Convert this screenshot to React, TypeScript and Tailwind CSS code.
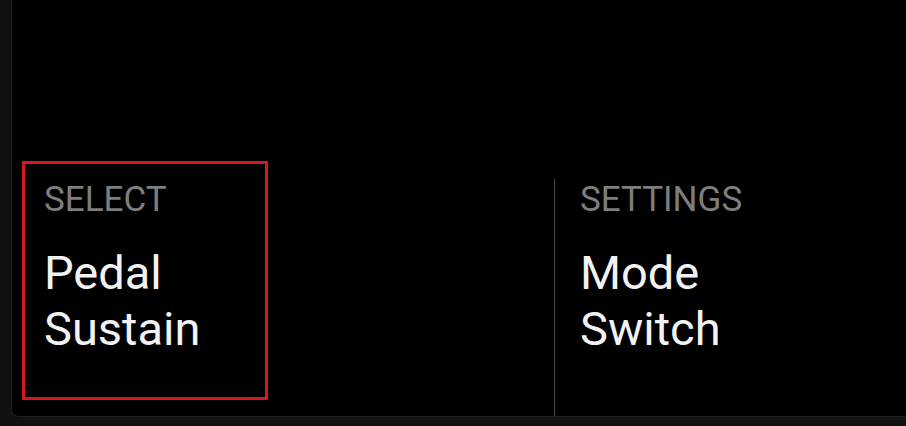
export default function App() {
  return (
    <div className="relative h-[426px] w-[906px] overflow-hidden bg-[#111111] font-['Roboto',sans-serif]">
      <div className="ml-[11px] mt-[-10px] flex h-[427px] w-[920px] flex-col justify-end rounded-bl-lg border border-[#1f1f1f] bg-black">
        <div className="flex items-stretch">
          {/* selected tile */}
          <div className="mb-[16px] ml-[10px] h-[239px] w-[246px] border-[3px] border-[#d2191e] px-[19px] pt-[16px]">
            <div className="text-[35px] leading-[40px] text-[#7e7e7e]">SELECT</div>
            <div className="mt-[25px] text-[47px] leading-[56px] text-[#f2f2f2]">
              Pedal
              <br />
              Sustain
            </div>
          </div>

          <div className="ml-[286px] mt-[18px] border-l border-[#4a4a4a] pl-[25px] pt-[1px]">
            <div className="text-[35px] leading-[40px] text-[#7e7e7e]">SETTINGS</div>
            <div className="mt-[25px] text-[47px] leading-[56px] text-[#f2f2f2]">
              Mode
              <br />
              Switch
            </div>
          </div>
        </div>
      </div>
    </div>
  );
}
